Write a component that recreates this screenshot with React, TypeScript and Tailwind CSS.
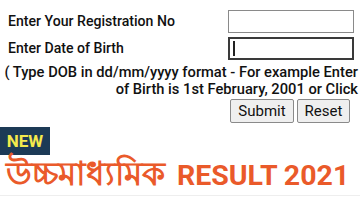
export default function App() {
  return (
    <div className="w-[360px] h-[202px] bg-white overflow-hidden font-['Roboto','Liberation_Sans',sans-serif] text-[#111]">
      <div className="flex items-center justify-between pl-2 pr-[6px] pt-[10px]">
        <span className="text-[14.1px] font-medium leading-none">Enter Your Registration No</span>
        <div className="w-[126px] h-[23px] border border-[#8a8a8a] bg-white" />
      </div>
      <div className="flex items-center justify-between pl-2 pr-[6px] mt-[4px]">
        <span className="text-[14.1px] font-medium leading-none">Enter Date of Birth</span>
        <div className="w-[126px] h-[23px] border-2 border-[#3a3a3a] bg-white flex items-center pl-[3px]">
          <div className="w-[1.5px] h-[15px] bg-[#222]" />
        </div>
      </div>
      <div className="mt-[4px] pr-[2px] text-right text-[14.7px] font-medium leading-[17px] whitespace-nowrap">
        <p>( Type DOB in dd/mm/yyyy format - For example Enter</p>
        <p>of Birth is 1st February, 2001 or Click</p>
      </div>
      <div className="flex justify-end gap-[3px] pr-[10px] mt-[1px]">
        <button className="h-[24px] w-[64px] bg-[#efefef] border border-[#8a8a8a] rounded-[2px] text-[15px] leading-none">Submit</button>
        <button className="h-[24px] w-[53px] bg-[#efefef] border border-[#8a8a8a] rounded-[2px] text-[15px] leading-none">Reset</button>
      </div>
      <div className="mt-[4px] w-[50px] h-[28px] bg-[#1c3a56] flex items-center justify-center">
        <span className="text-[#f4ea4c] text-[17px] font-bold leading-none">NEW</span>
      </div>
      <div className="pl-[6px] text-[#ea5a2a] text-[28.5px] font-bold leading-[38px] whitespace-nowrap flex items-baseline gap-[12px]">
        <span className="text-[33px]">উচ্চমাধ্যমিক</span>
        <span>RESULT 2021</span>
      </div>
      <div className="h-px bg-[#eeeeee]" />
    </div>
  );
}
